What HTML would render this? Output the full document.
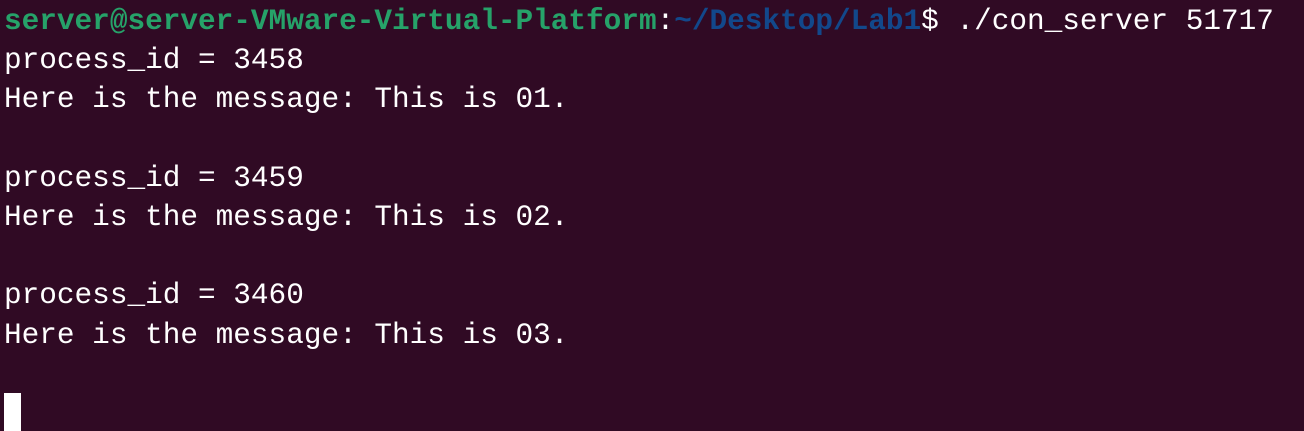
<!DOCTYPE html>
<html><head><style>
html,body{margin:0;padding:0;background:#300a24;width:1304px;height:431px;overflow:hidden}
pre{position:absolute;left:4px;top:2px;margin:0;font-family:"Liberation Mono",monospace;font-size:29.4px;line-height:39.2px;color:#ffffff}
.g{color:#26a269;font-weight:bold}.b{color:#12488b;font-weight:bold}
.cur{position:absolute;left:4px;top:393px;width:17px;height:38px;background:#fff}
</style></head><body>
<pre><span class="g">server@server-VMware-Virtual-Platform</span>:<span class="b">~/Desktop/Lab1</span>$ ./con_server 51717
process_id = 3458
Here is the message: This is 01.

process_id = 3459
Here is the message: This is 02.

process_id = 3460
Here is the message: This is 03.
</pre>
<div class="cur"></div>
</body></html>
